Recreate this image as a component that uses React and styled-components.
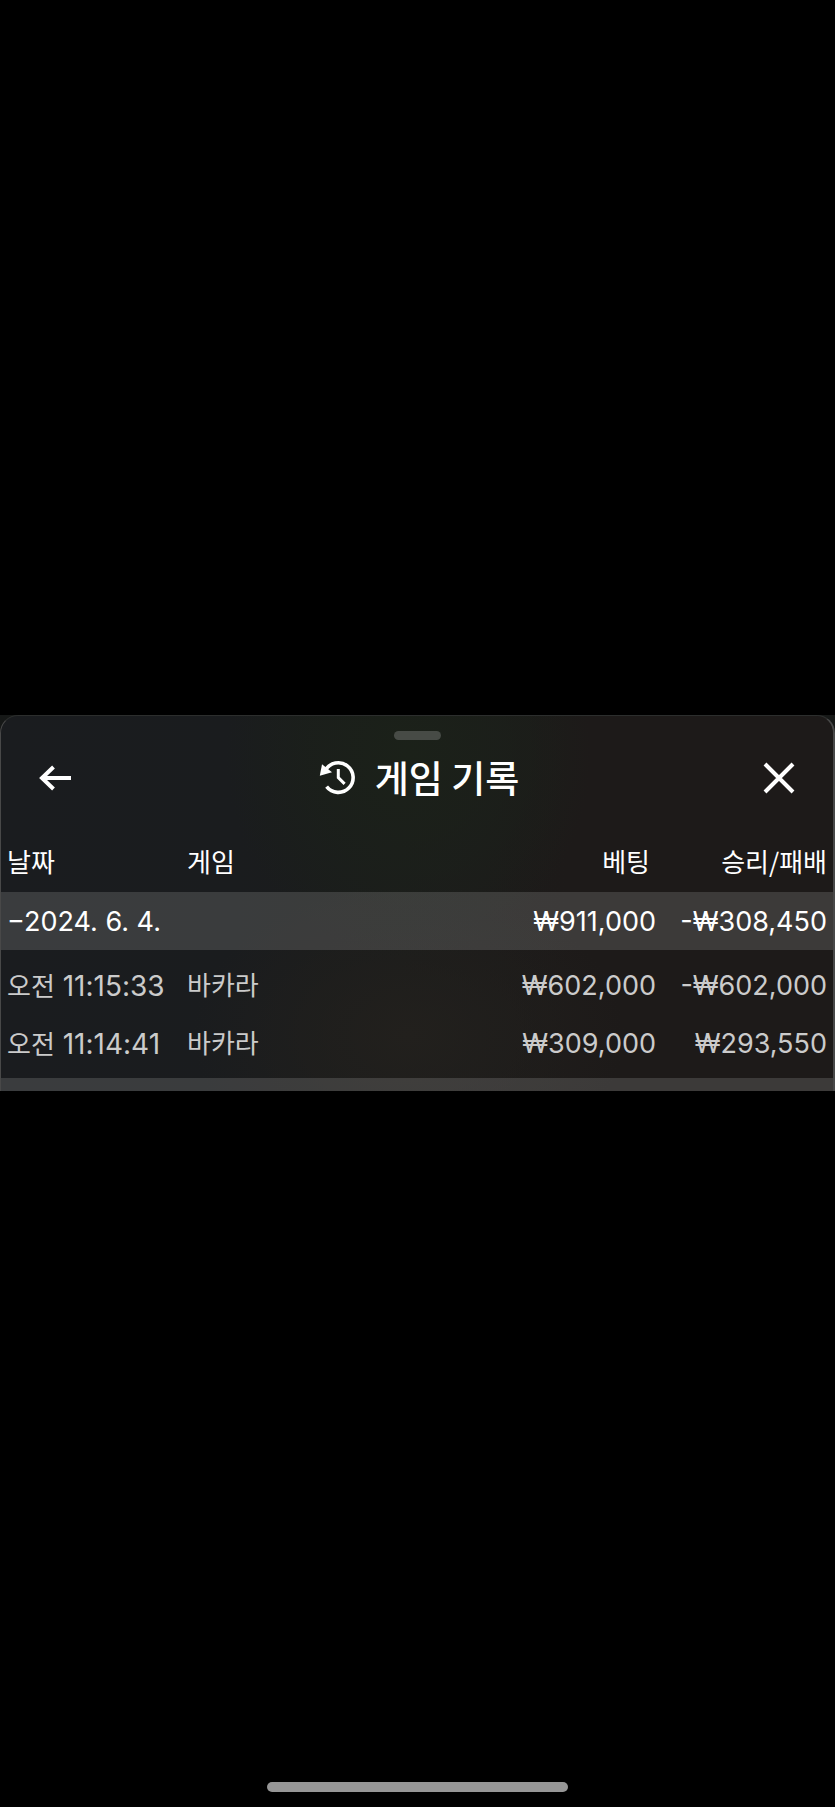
import React from "react";
import styled, { createGlobalStyle } from "styled-components";

const GlobalStyle = createGlobalStyle`
  * { box-sizing: border-box; }
  body { margin: 0; background: #000; }
`;

const Screen = styled.main`
  min-height: 100vh;
  display: grid;
  grid-template-rows: 1fr auto 1fr;
  padding-bottom: 2px;
  background: #000;
  color: #fff;
  font-family: Inter, "Noto Sans CJK KR", sans-serif;
`;

const Backdrop = styled.div`
  grid-row: 2;
  background: #161817;
`;

const Sheet = styled.section`
  border: solid #484848;
  border-width: 1px 2px 0 1px;
  border-top-color: #2c2e2d;
  border-radius: 18px 18px 0 0;
  overflow: hidden;
  background:
    radial-gradient(ellipse 22% 55% at 49% 10%, #1b2119 0%, #1b201aaa 55%, #1b1f1a00 100%),
    radial-gradient(ellipse 26% 40% at 49% 85%, #22201d 0%, #22201d00 100%),
    linear-gradient(90deg, #1a1c1f 0%, #1a1c1e 28%, #1b1c1b 48%, #1d1a19 68%, #1d1a19 100%);
`;

const Handle = styled.div`
  width: 47px;
  height: 9px;
  margin: 15px auto 0;
  border-radius: 5px;
  background: #474b46;
`;

const Header = styled.header`
  display: flex;
  align-items: center;
  justify-content: space-between;
  height: 76px;
  padding: 0 30px;
`;

const IconButton = styled.button`
  display: flex;
  align-items: center;
  justify-content: center;
  width: 48px;
  height: 48px;
  padding: 0;
  border: 0;
  background: none;
  color: inherit;
  cursor: pointer;
`;

const Title = styled.h1`
  display: flex;
  align-items: center;
  gap: 20px;
  margin: 0;
  padding: 0 0 2px 4px;
  font: 500 37px/48px "Noto Sans CJK KR", sans-serif;
`;

const Table = styled.table`
  width: 100%;
  border-collapse: collapse;
  table-layout: fixed;
`;

const Column = styled.col`
  width: ${(p) => p.$width || "auto"};
`;

const Cell = styled.td`
  height: 58px;
  padding: 2px 6px 0;
  text-align: ${(p) => (p.$end ? "right" : "left")};
  font-size: ${(p) => (p.$time ? "28px" : "27px")};
  font-weight: 400;
  line-height: 32px;
  white-space: nowrap;
`;

const HeadCell = styled(Cell).attrs({ as: "th", scope: "col" })`
  height: 76px;
  padding: ${(p) => (p.$inset ? "14px 12px 0 6px" : "14px 6px 0")};
  font-family: "Noto Sans CJK KR", sans-serif;
  font-size: 26px;
`;

const Korean = styled.span`
  font-family: "Noto Sans CJK KR", sans-serif;
  font-size: 26px;
`;

const GameCell = styled(Cell)`
  padding: 0 6px 2px;
  font-family: "Noto Sans CJK KR", sans-serif;
  font-size: 26px;
`;

const DayRow = styled.tr`
  background: #ffffff24;
`;

const Rounds = styled.tbody`
  color: #cbcbcb;
`;

const GapCell = styled.td`
  height: 6px;
  padding: 0;
`;

const NextDay = styled.div`
  height: 13px;
  background: #ffffff24;
`;

const HomeIndicator = styled.div`
  grid-row: 3;
  align-self: end;
  justify-self: center;
  width: 36%;
  height: 10px;
  margin-bottom: 13px;
  border-radius: 5px;
  background: #969696;
`;

const rounds = [
  { time: "11:15:33", game: "바카라", bet: "₩602,000", result: "-₩602,000" },
  { time: "11:14:41", game: "바카라", bet: "₩309,000", result: "₩293,550" },
];

function BackIcon() {
  return (
    <svg width="32" height="26" viewBox="0 0 32 26" fill="none" stroke="currentColor" strokeWidth="4" aria-hidden="true">
      <path d="M32 13H4M14.5 2 3 13l11.5 11" />
    </svg>
  );
}

function CloseIcon() {
  return (
    <svg width="32" height="32" viewBox="0 0 32 32" fill="none" stroke="currentColor" strokeWidth="4" aria-hidden="true">
      <path d="m2 2 28 28m0-28-28 28" />
    </svg>
  );
}

function HistoryIcon() {
  return (
    <svg width="36" height="36" viewBox="0 0 36 36" fill="none" stroke="currentColor" aria-hidden="true">
      <path d="M6.5 11.2A14.8 14.8 0 1 1 7.6 27.6" strokeWidth="3.6" />
      <path d="M19.3 10v8.6l6.3 6.3" strokeWidth="3" />
      <path d="M3 5.3.8 16.8l12.2-3.6Z" fill="currentColor" stroke="none" />
    </svg>
  );
}

export default function App() {
  return (
    <>
      <GlobalStyle />
      <Screen>
        <Backdrop>
          <Sheet>
            <Handle />
            <Header>
              <IconButton type="button" aria-label="뒤로">
                <BackIcon />
              </IconButton>
              <Title>
                <HistoryIcon />
                게임 기록
              </Title>
              <IconButton type="button" aria-label="닫기">
                <CloseIcon />
              </IconButton>
            </Header>
            <Table>
              <colgroup>
                <Column $width="180px" />
                <Column />
                <Column $width="180px" />
                <Column $width="171px" />
              </colgroup>
              <thead>
                <tr>
                  <HeadCell>날짜</HeadCell>
                  <HeadCell>게임</HeadCell>
                  <HeadCell $end $inset>베팅</HeadCell>
                  <HeadCell $end>승리/패배</HeadCell>
                </tr>
              </thead>
              <tbody>
                <DayRow>
                  <Cell colSpan={2}>−2024. 6. 4.</Cell>
                  <Cell $end>₩911,000</Cell>
                  <Cell $end>-₩308,450</Cell>
                </DayRow>
              </tbody>
              <Rounds>
                <tr><GapCell colSpan={4} /></tr>
                {rounds.map((r) => (
                  <tr key={r.time}>
                    <Cell $time><Korean>오전</Korean> {r.time}</Cell>
                    <GameCell>{r.game}</GameCell>
                    <Cell $end>{r.bet}</Cell>
                    <Cell $end>{r.result}</Cell>
                  </tr>
                ))}
                <tr><GapCell colSpan={4} /></tr>
              </Rounds>
            </Table>
            <NextDay />
          </Sheet>
        </Backdrop>
        <HomeIndicator />
      </Screen>
    </>
  );
}
